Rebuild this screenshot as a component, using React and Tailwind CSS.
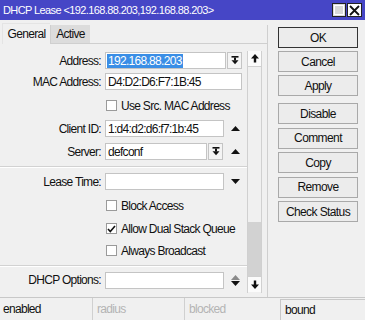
import React from "react";

const font = { fontFamily: '"Liberation Sans", Arial, sans-serif' };

function DropBtn({ w = "w-[15px]" }) {
  return (
    <div className={`${w} h-[17px] bg-[#f4f4f4] border border-[#c4c4c4] flex items-center justify-center`}>
      <svg width="8" height="9" viewBox="0 0 8 9">
        <rect x="0.5" y="0" width="7" height="1.6" fill="#111" />
        <rect x="3" y="1.5" width="2" height="3" fill="#111" />
        <path d="M0.5 4.2 L7.5 4.2 L4 8.2 Z" fill="#111" />
      </svg>
    </div>
  );
}

function TriUp({ color = "#111" }) {
  return (
    <svg width="9" height="5" viewBox="0 0 9 5">
      <path d="M0 5 L9 5 L4.5 0 Z" fill={color} />
    </svg>
  );
}
function TriDown({ color = "#111" }) {
  return (
    <svg width="9" height="5" viewBox="0 0 9 5">
      <path d="M0 0 L9 0 L4.5 5 Z" fill={color} />
    </svg>
  );
}

function Label({ children }) {
  return (
    <div className="w-[101px] text-right shrink-0 text-[12px] tracking-[-0.7px] text-[#111] leading-none whitespace-nowrap">
      {children}
    </div>
  );
}

function Input({ w, children }) {
  return (
    <div className={`${w} h-[17px] bg-white border border-[#c4c4c4] flex items-center pl-[2px] text-[12px] tracking-[-0.7px] text-[#111] leading-none overflow-hidden whitespace-nowrap`}>
      {children}
    </div>
  );
}

function Check({ checked, label, mt }) {
  return (
    <div className={`${mt} h-[17px] flex items-center`}>
      <div className="w-[106px] shrink-0" />
      <div className="w-[11px] h-[11px] bg-white border border-[#9a9a9a] flex items-center justify-center">
        {checked && (
          <svg width="9" height="8" viewBox="0 0 9 8">
            <path d="M1 4 L3.3 6.5 L8 1" stroke="#111" strokeWidth="1.6" fill="none" />
          </svg>
        )}
      </div>
      <div className="ml-[4px] text-[12px] tracking-[-0.7px] text-[#111] leading-none whitespace-nowrap">{label}</div>
    </div>
  );
}

function Btn({ children, focus }) {
  return (
    <div
      className={`w-[80px] h-[21px] flex items-center justify-center text-[12px] tracking-[-0.6px] text-[#111] leading-none ${
        focus ? "border border-[#333] bg-[#ececec]" : "border border-[#a9a9a9] bg-[#ececec]"
      }`}
    >
      {children}
    </div>
  );
}

export default function App() {
  return (
    <div style={font} className="w-[365px] h-[320px] bg-[#f0f0f0] flex flex-col overflow-hidden select-none">
      {/* Title bar */}
      <div className="h-[20px] bg-[#4646c6] flex items-center justify-between pl-[3px] pr-[3px] shrink-0">
        <div className="text-white text-[11px] tracking-[-0.6px] leading-none whitespace-nowrap">
          DHCP Lease &lt;192.168.88.203,192.168.88.203&gt;
        </div>
        <div className="flex items-center gap-[1px]">
          <div className="w-[14px] h-[14px] bg-[#dcdcdc] border border-[#222] flex items-center justify-center">
            <div className="w-[10px] h-[10px] border border-white bg-[#d8d8d8]" />
          </div>
          <div className="w-[15px] h-[14px] bg-white border border-[#222] flex items-center justify-center">
            <svg width="11" height="11" viewBox="0 0 11 11">
              <path d="M1 1 L10 10 M10 1 L1 10" stroke="#111" strokeWidth="1.8" />
            </svg>
          </div>
        </div>
      </div>

      {/* Body */}
      <div className="flex flex-1 min-h-0">
        {/* Left: tabs + panel */}
        <div className="w-[268px] flex flex-col shrink-0">
          <div className="h-[24px] flex items-end shrink-0">
            <div className="w-[2px] h-[21px]" />
            <div className="w-[48px] h-[21px] flex items-center justify-center text-[12px] tracking-[-0.7px] text-[#111] leading-none border-t border-l border-[#e4e4e4]">
              General
            </div>
            <div className="w-[40px] h-[19px] bg-[#dcdcdc] border-l border-b border-[#cfcfcf] flex items-center justify-center text-[12px] tracking-[-0.7px] text-[#111] leading-none">
              Active
            </div>
            <div className="flex-1 h-[19px] border-b border-r border-[#cfcfcf]" />
          </div>
          <div className="flex-1 border-r border-[#cfcfcf] flex">
            {/* Form column */}
            <div className="w-[247px] flex flex-col shrink-0">
              {/* Address */}
              <div className="mt-[8px] h-[17px] flex items-center">
                <Label>Address:</Label>
                <div className="w-[4px]" />
                <div className="w-[121px] h-[17px] bg-white border border-[#c4c4c4] flex items-center pl-[1px] text-[12px] tracking-[-0.7px] leading-none whitespace-nowrap">
                  <span className="bg-[#3a8ee6] text-white h-[14px] flex items-center px-[1px]">192.168.88.203</span>
                </div>
                <div className="w-[1px]" />
                <DropBtn />
              </div>
              {/* MAC */}
              <div className="mt-[4px] h-[17px] flex items-center">
                <Label>MAC Address:</Label>
                <div className="w-[4px]" />
                <Input w="w-[137px]">D4:D2:D6:F7:1B:45</Input>
              </div>
              <Check mt="mt-[7px]" label="Use Src. MAC Address" />
              {/* Client ID */}
              <div className="mt-[6px] h-[17px] flex items-center">
                <Label>Client ID:</Label>
                <div className="w-[4px]" />
                <Input w="w-[119px]">1:d4:d2:d6:f7:1b:45</Input>
                <div className="flex-1 flex items-center justify-center">
                  <TriUp />
                </div>
              </div>
              {/* Server */}
              <div className="mt-[6px] h-[17px] flex items-center">
                <Label>Server:</Label>
                <div className="w-[4px]" />
                <Input w="w-[102px]">defconf</Input>
                <div className="w-[1px]" />
                <DropBtn />
                <div className="flex-1 flex items-center justify-center">
                  <TriUp />
                </div>
              </div>
              <div className="mt-[6px] h-[2px] border-t border-[#d2d2d2] border-b border-b-white" />
              {/* Lease */}
              <div className="mt-[5px] h-[17px] flex items-center">
                <Label>Lease Time:</Label>
                <div className="w-[4px]" />
                <Input w="w-[119px]"></Input>
                <div className="flex-1 flex items-center justify-center">
                  <TriDown />
                </div>
              </div>
              <Check mt="mt-[7px]" label="Block Access" />
              <Check mt="mt-[6px]" checked label="Allow Dual Stack Queue" />
              <Check mt="mt-[5px]" label="Always Broadcast" />
              <div className="mt-[6px] h-[2px] border-t border-[#d2d2d2] border-b border-b-white" />
              {/* DHCP Options */}
              <div className="mt-[4px] h-[18px] flex items-center">
                <Label>DHCP Options:</Label>
                <div className="w-[4px]" />
                <Input w="w-[119px]"></Input>
                <div className="flex-1 flex flex-col items-center justify-center gap-[1px]">
                  <TriUp color="#8a8a8a" />
                  <TriDown />
                </div>
              </div>
            </div>
            {/* Scrollbar */}
            <div className="mt-[7px] w-[15px] h-[242px] flex flex-col border-x border-[#d0d0d0] shrink-0">
              <div className="h-[16px] bg-[#fbfbfb] border-b border-[#d0d0d0] flex items-center justify-center">
                <svg width="8" height="9" viewBox="0 0 8 9">
                  <path d="M4 0 L8 4.5 L5.2 4.5 L5.2 8.5 L2.8 8.5 L2.8 4.5 L0 4.5 Z" fill="#111" />
                </svg>
              </div>
              <div className="h-[155px]" />
              <div className="h-[54px] bg-[#d2d2d2]" />
              <div className="h-[16px] bg-[#fbfbfb] border-t border-[#d0d0d0] flex items-center justify-center">
                <svg width="8" height="9" viewBox="0 0 8 9">
                  <path d="M4 9 L8 4.5 L5.2 4.5 L5.2 0.5 L2.8 0.5 L2.8 4.5 L0 4.5 Z" fill="#111" />
                </svg>
              </div>
            </div>
          </div>
        </div>

        {/* Right: buttons */}
        <div className="flex-1 pl-[10px] pt-[7px] flex flex-col">
          <div className="flex flex-col gap-[3px]">
            <Btn focus>OK</Btn>
            <Btn>Cancel</Btn>
            <Btn>Apply</Btn>
          </div>
          <div className="mt-[7px] flex flex-col gap-[3.5px]">
            <Btn>Disable</Btn>
            <Btn>Comment</Btn>
            <Btn>Copy</Btn>
            <Btn>Remove</Btn>
            <Btn>Check Status</Btn>
          </div>
        </div>
      </div>

      {/* Status bar */}
      <div className="h-[23px] border-t border-[#c8c8c8] flex shrink-0 text-[12px] tracking-[-0.7px] leading-none">
        <div className="w-[93px] flex items-center pl-[3px] text-[#111] border-r border-[#d0d0d0]">enabled</div>
        <div className="w-[92px] flex items-center pl-[4px] text-[#b4b4b4] border-r border-[#d0d0d0]">radius</div>
        <div className="w-[92px] flex items-center pl-[4px] text-[#b4b4b4]">blocked</div>
        <div className="flex-1 ml-[3px] mt-[1px] flex items-center pl-[4px] text-[#111] border-t border-l border-[#c8c8c8]">bound</div>
      </div>
    </div>
  );
}
